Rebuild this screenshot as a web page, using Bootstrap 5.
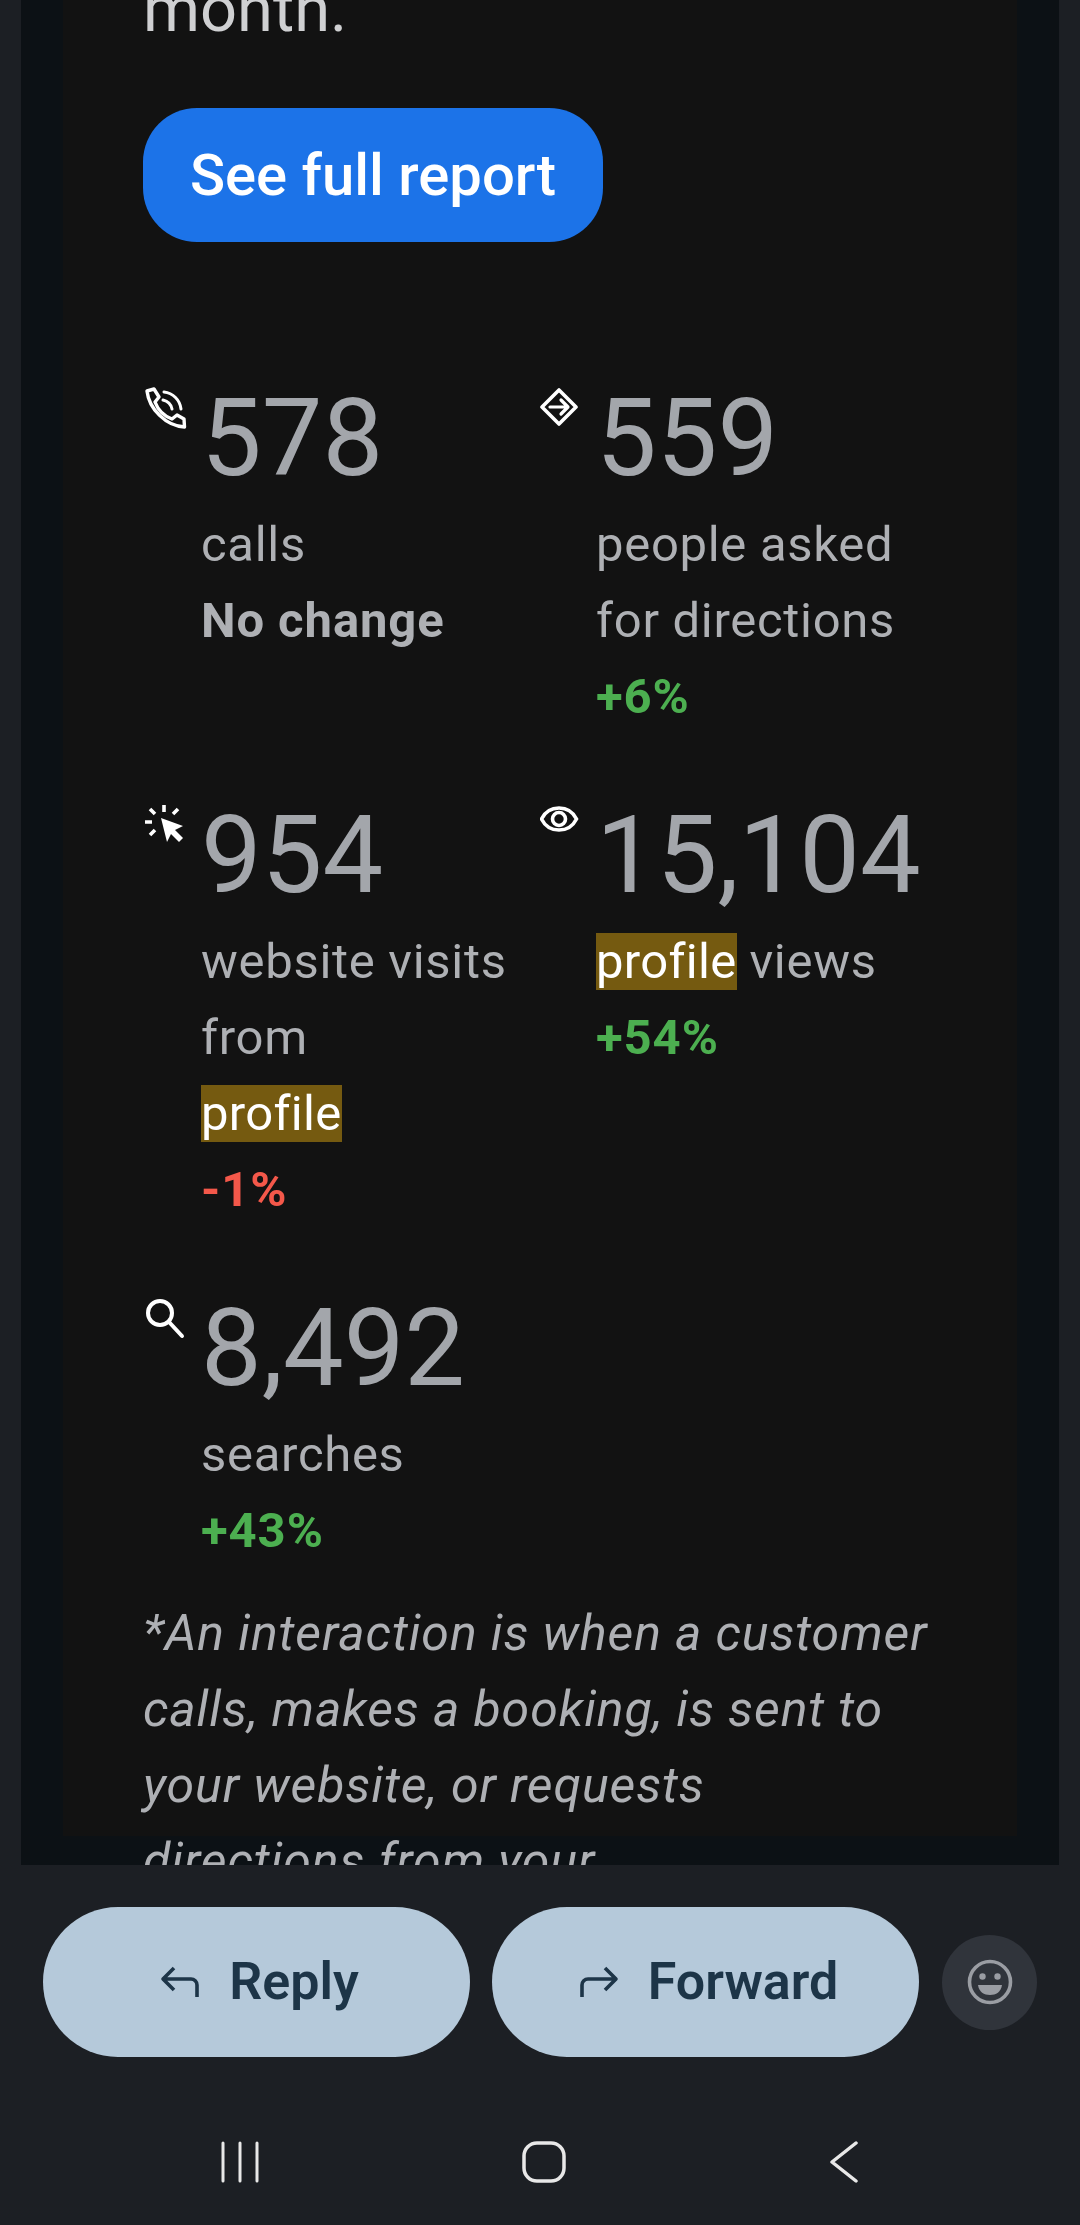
<!DOCTYPE html>
<html lang="en">
<head>
<meta charset="UTF-8">
<title>Performance report</title>
<link href="https://cdn.jsdelivr.net/npm/bootstrap@5.3.0/dist/css/bootstrap.min.css" rel="stylesheet">
<style>
    html, body { height: 2225px; overflow: hidden; }
    body { background: #1c1f24; font-family: Roboto, "Liberation Sans", sans-serif; }
    .mail-frame { height: 1865px; margin: 0 21px; padding: 0 42px; background: #0c1115; overflow: hidden; }
    .mail-body { height: 100%; background: #121212; padding-left: 80px; color: #aeb0b4; font-size: 49px; line-height: 76px; letter-spacing: 0.7px; }
    .intro-end { margin-top: -29px; margin-bottom: 61px; font-size: 65px; color: #cfd0d2; letter-spacing: 0; }
    .report-btn { width: 460px; height: 134px; padding: 0; border: 0; border-radius: 54px; background: #1c73e8; color: #fff; font-size: 58px; font-weight: 500; letter-spacing: 0; }
    .report-btn:hover { background: #1c73e8; color: #fff; }
    .stat-grid { display: grid; grid-template-columns: 395px 1fr; row-gap: 51px; margin-top: 127px; }
    .stat-icon { flex: 0 0 58px; width: 58px; padding: 18px 0 0 2px; }
    .stat-icon svg { display: block; width: 42px; height: 42px; color: #fff; }
    .stat-num { font-size: 108px; line-height: 138px; color: #a3a6ab; letter-spacing: 0; }
    .stat-note { font-weight: 700; letter-spacing: 0.9px; }
    .up { color: #4caf50; font-weight: 700; letter-spacing: 0.9px; }
    .down { color: #f4584a; font-weight: 700; letter-spacing: 0.9px; }
    .hl { background: #755a10; color: #fff; letter-spacing: 0.3px; }
    .foot-note { margin-top: 26px; width: 790px; font-size: 50px; font-style: italic; letter-spacing: 0.9px; }
    .action-row { padding: 42px 43px 0; gap: 22px; }
    .pill-btn { width: 427px; height: 150px; border-radius: 75px; border: 0; padding: 0 0 0 5px; background: #b5c9da; color: #1d3548; font-size: 52px; font-weight: 600; letter-spacing: 0; gap: 28px; }
    .pill-btn:hover { background: #b5c9da; color: #1d3548; }
    .pill-btn svg { width: 42px; height: 42px; }
    .emoji-btn { width: 95px; height: 95px; margin-left: 1px; border-radius: 50%; background: #30343b; }
    .emoji-btn svg { width: 46px; height: 46px; }
    .sys-nav { height: 124px; margin-top: 63px; padding: 0 221px 41px 221px; justify-content: space-between; }
    .sys-nav svg { display: block; }
</style>
</head>
<body>

<div class="mail-frame">
    <div class="mail-body">
        <div class="intro-end">month.</div>
        <button type="button" class="btn report-btn">See full report</button>

        <div class="stat-grid">
            <div class="d-flex">
                <div class="stat-icon">
                    <svg viewBox="0 0 42 42" fill="none" stroke="currentColor" stroke-width="3.4" stroke-linejoin="round" stroke-linecap="round">
                        <path d="M2 4 9 2l5 8-4 5C13 23 19 29 27 32l5-4 7 4 .5 8C21 39 4 22 2 4Z"/>
                        <path d="M19 5c9 1 16 8 17 17M18 13c4 1 8 4 9 9" stroke-width="3"/>
                    </svg>
                </div>
                <div>
                    <div class="stat-num">578</div>
                    <div>calls</div>
                    <div class="stat-note">No change</div>
                </div>
            </div>
            <div class="d-flex">
                <div class="stat-icon">
                    <svg viewBox="0 0 42 42" fill="none" stroke="currentColor" stroke-width="3.6" stroke-linejoin="round" stroke-linecap="round">
                        <path d="M19 3 36 20 19 37 2 20Z"/>
                        <path d="M10 20h17M21 13l7 7-7 7" stroke-width="3.2"/>
                    </svg>
                </div>
                <div>
                    <div class="stat-num">559</div>
                    <div>people asked<br>for directions</div>
                    <div class="up">+6%</div>
                </div>
            </div>
            <div class="d-flex">
                <div class="stat-icon">
                    <svg viewBox="0 0 42 42" fill="none" stroke="currentColor" stroke-width="3.6">
                        <path fill="currentColor" stroke="none" d="M16 14 38 22l-8 4 8 8-4 4-8-8-4 8Z"/>
                        <path d="M19 1v7M5 5l5 5M33 5l-5 5M0 18h7M5 31l5-5"/>
                    </svg>
                </div>
                <div>
                    <div class="stat-num">954</div>
                    <div>website visits<br>from<br><span class="hl">profile</span></div>
                    <div class="down">-1%</div>
                </div>
            </div>
            <div class="d-flex">
                <div class="stat-icon">
                    <svg viewBox="0 0 42 42" fill="none" stroke="currentColor" stroke-width="3.6">
                        <path d="M1.500 15C5 8 11 4 19 4s14 4 17.500 11C33 22 27 26 19 26S5 22 1.500 15Z"/>
                        <circle cx="19" cy="15" r="6.500"/>
                    </svg>
                </div>
                <div>
                    <div class="stat-num">15,104</div>
                    <div><span class="hl">profile</span> views</div>
                    <div class="up">+54%</div>
                </div>
            </div>
            <div class="d-flex">
                <div class="stat-icon">
                    <svg viewBox="0 0 42 42" fill="none" stroke="currentColor" stroke-width="4" stroke-linecap="round">
                        <circle cx="15" cy="16" r="12"/>
                        <path d="M24 25 37 39"/>
                    </svg>
                </div>
                <div>
                    <div class="stat-num">8,492</div>
                    <div>searches</div>
                    <div class="up">+43%</div>
                </div>
            </div>
        </div>

        <div class="foot-note">*An interaction is when a customer calls, makes a booking, is sent to your website, or requests directions from your</div>
    </div>
</div>

<div class="d-flex align-items-center action-row">
    <button type="button" class="btn d-flex align-items-center justify-content-center pill-btn">
        <svg viewBox="0 0 42 42" fill="none" stroke="currentColor" stroke-width="3.6" stroke-linejoin="round"><path d="M38 36V24a6 6 0 0 0-6-6H5M15 7 4 18l11 11"/></svg>
        Reply
    </button>
    <button type="button" class="btn d-flex align-items-center justify-content-center pill-btn">
        <svg viewBox="0 0 42 42" fill="none" stroke="currentColor" stroke-width="3.6" stroke-linejoin="round"><path d="M4 36V24a6 6 0 0 1 6-6h27M27 7l11 11-11 11"/></svg>
        Forward
    </button>
    <div class="d-flex align-items-center justify-content-center emoji-btn">
        <svg viewBox="0 0 46 46"><circle cx="23" cy="23" r="20.500" fill="none" stroke="#9a9da3" stroke-width="3.600"/><circle cx="15.500" cy="17.500" r="3.200" fill="#9a9da3"/><circle cx="30.500" cy="17.500" r="3.200" fill="#9a9da3"/><path d="M11 26h24c-1 7-6 10-12 10s-11-3-12-10Z" fill="#9a9da3"/></svg>
    </div>
</div>

<div class="d-flex align-items-center sys-nav">
    <svg width="38" height="42" viewBox="0 0 38 42" fill="none" stroke="#e8e8e8" stroke-width="3" stroke-linecap="round"><path d="M2 2v38M19 2v38M36 2v38"/></svg>
    <svg width="44" height="42" viewBox="0 0 44 42" fill="none" stroke="#e8e8e8" stroke-width="3.500"><rect x="2" y="2" width="40" height="38" rx="13"/></svg>
    <svg width="30" height="42" viewBox="0 0 30 42" fill="none" stroke="#e8e8e8" stroke-width="3.500" stroke-linecap="round" stroke-linejoin="round"><path d="M27 2 3 21l24 19" /></svg>
</div>

<script src="https://cdn.jsdelivr.net/npm/bootstrap@5.3.0/dist/js/bootstrap.bundle.min.js"></script>
</body>
</html>
